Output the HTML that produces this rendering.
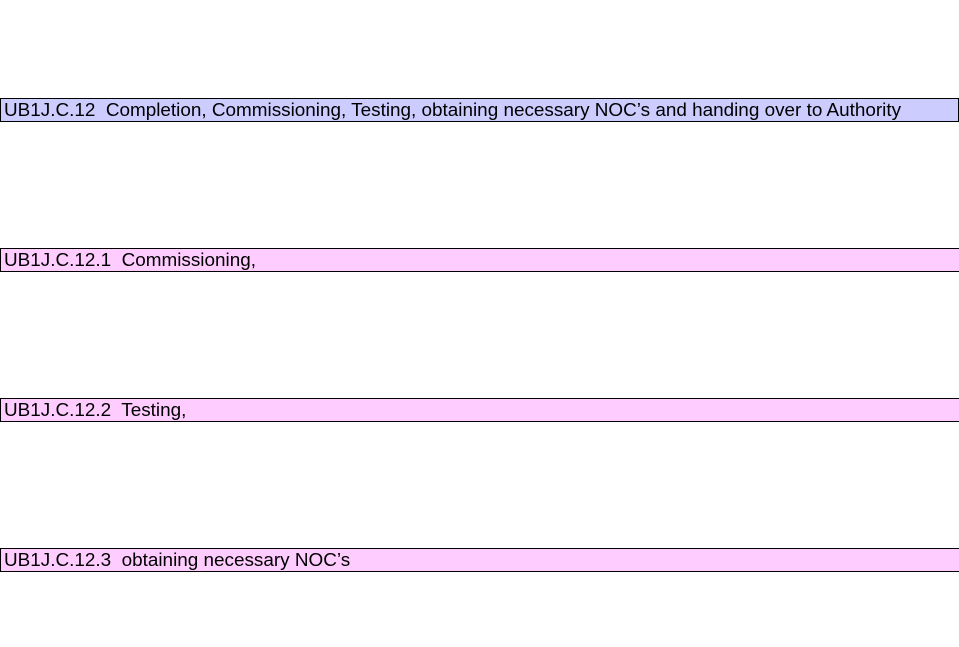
<!DOCTYPE html>
<html><head><style>
body{margin:0;width:959px;height:647px;background:#fff;position:relative;overflow:hidden;font-family:"Liberation Sans",Arial,sans-serif;}
.b{position:absolute;left:0;height:22px;border:1px solid #000;box-sizing:content-box;font-size:18.9px;line-height:23px;padding-left:3px;white-space:pre;color:#000;overflow:hidden;}
</style></head><body>
<div class="b" style="top:98px;width:954px;background:#ccccff;">UB1J.C.12  Completion, Commissioning, Testing, obtaining necessary NOC’s and handing over to Authority</div>
<div class="b" style="top:248px;width:965px;background:#ffccff;">UB1J.C.12.1  Commissioning,</div>
<div class="b" style="top:398px;width:965px;background:#ffccff;">UB1J.C.12.2  Testing,</div>
<div class="b" style="top:548px;width:965px;background:#ffccff;">UB1J.C.12.3  obtaining necessary NOC’s</div>
</body></html>
